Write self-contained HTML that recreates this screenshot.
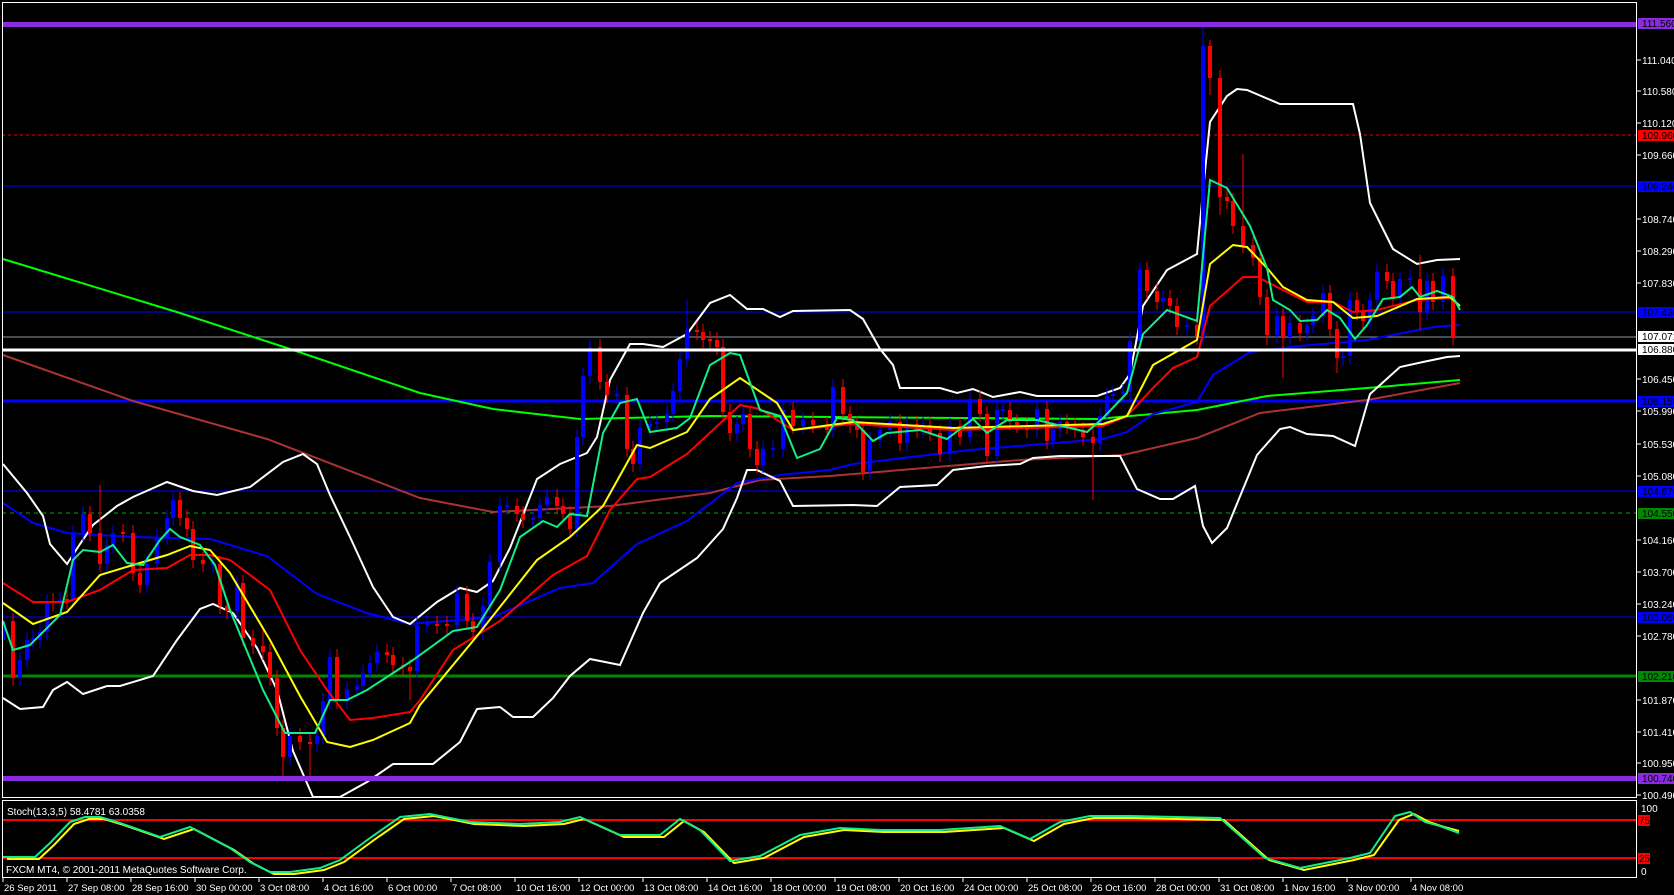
<!DOCTYPE html>
<html><head><meta charset="utf-8"><style>
html,body{margin:0;padding:0;background:#000;width:1674px;height:895px;overflow:hidden}
svg{display:block}
text{font-family:"Liberation Sans",sans-serif;font-size:10px;fill:#fff}
.k{fill:#000}
.t{font-size:9.5px}
</style></head><body>
<svg width="1674" height="895" viewBox="0 0 1674 895" xmlns="http://www.w3.org/2000/svg">
<rect width="1674" height="895" fill="#000"/>
<line x1="2" y1="135" x2="1637" y2="135" stroke="#e00" stroke-dasharray="3,3"/>
<line x1="2" y1="186" x2="1637" y2="186" stroke="#00f"/>
<line x1="2" y1="312" x2="1637" y2="312" stroke="#00f"/>
<line x1="2" y1="337" x2="1637" y2="337" stroke="#8a9aa8"/>
<line x1="2" y1="401" x2="1637" y2="401" stroke="#00f" stroke-width="3"/>
<line x1="2" y1="491" x2="1637" y2="491" stroke="#00f"/>
<line x1="2" y1="513" x2="1637" y2="513" stroke="#0a0" stroke-dasharray="4,4"/>
<line x1="2" y1="617" x2="1637" y2="617" stroke="#00f"/>
<line x1="2" y1="676" x2="1637" y2="676" stroke="#080" stroke-width="3"/>

<polyline fill="none" stroke="#0f0" stroke-width="2" points="3,259 180,313 293,350 420,393 493,409 580,419 710,416 830,417 1097,419 1197,410 1267,396 1367,388 1460,380"/>
<polyline fill="none" stroke="#a33" stroke-width="2" points="3,355 133,401 267,439 420,498 493,512 610,506 710,493 760,480 830,476 1020,460 1123,455 1197,438 1260,413 1367,400 1460,383"/>
<polyline fill="none" stroke="#00f" stroke-width="2" points="3,503 33,523 67,533 133,537 210,539 267,556 317,594 367,613 410,624 493,617 560,588 593,583 637,544 687,521 737,483 780,475 830,470 853,464 970,450 1103,439 1127,432 1153,414 1197,402 1213,375 1250,352 1300,346 1367,340 1433,327 1460,325"/>
<polyline fill="none" stroke="#fff" stroke-width="2" points="3,464 27,493 43,516 50,544 67,564 80,544 93,525 117,506 133,497 167,482 193,491 217,495 250,487 283,462 303,454 317,464 330,495 350,537 373,587 393,617 410,624 437,602 460,588 477,592 493,581 510,548 537,479 560,464 587,453 597,437 610,380 630,344 643,344 663,347 687,334 710,303 730,295 747,309 763,309 780,317 793,311 850,310 863,319 880,349 893,365 900,388 940,388 957,393 973,389 993,397 1020,392 1037,396 1097,396 1120,388 1130,374 1143,306 1167,270 1197,254 1203,191 1210,122 1227,96 1237,89 1247,90 1280,104 1353,104 1360,134 1370,203 1393,249 1417,264 1437,260 1460,259"/>
<polyline fill="none" stroke="#fff" stroke-width="2" points="3,698 20,709 43,707 53,690 67,682 83,694 107,686 120,686 153,676 177,640 200,609 213,604 233,613 257,648 277,690 293,751 313,797 340,797 367,782 393,764 420,764 433,764 460,742 477,709 500,707 513,717 533,717 553,698 570,676 590,659 620,665 643,613 660,583 697,558 723,529 737,498 747,470 757,470 780,481 793,506 853,505 877,506 900,487 937,485 953,470 987,466 1020,464 1033,458 1060,456 1120,456 1137,489 1160,499 1173,499 1195,486 1203,526 1212,543 1227,528 1257,455 1280,429 1290,427 1307,434 1333,436 1355,446 1370,394 1400,367 1423,362 1447,357 1460,356"/>

<path fill="none" stroke="#00f" stroke-width="1" d="M3 648V613M20 686V652M27 668V632M33 649V630M40 648V624M47 640V594M60 610V592M73 608V525M83 541V506M107 572V537M113 553V525M147 593V556M157 572V529M167 545V510M173 526V492M213 573V555M237 619V575M290 765V728M317 752V728M323 744V693M330 709V649M347 709V682M357 698V678M363 694V665M370 681V655M377 671V644M417 679V617M427 633V615M457 633V586M483 640V598M490 614V554M500 570V498M507 515V497M533 528V510M540 526V497M547 513V489M577 537V429M583 445V368M590 384V339M617 404V386M640 472V420M650 436V416M657 432V414M667 430V406M673 422V383M680 399V351M687 367V300M737 441V416M743 432V406M763 473V441M773 458V440M783 457V402M803 434V412M833 438V379M870 480V432M880 448V422M890 438V414M907 451V416M923 438V417M950 462V418M970 445V391M997 464V402M1003 419V401M1037 438V401M1053 449V422M1060 438V414M1100 451V408M1107 424V388M1113 404V386M1123 402V384M1130 400V333M1140 349V262M1163 310V290M1187 335V317M1203 345V24M1277 343V308M1290 345V315M1307 341V317M1313 333V308M1323 324V285M1343 366V348M1350 364V292M1370 329V292M1377 308V264M1400 305V271M1410 288V270M1427 320V273M1443 310V268"/>
<path fill="none" stroke="#00f" stroke-width="4" d="M3 640V621M20 678V660M27 660V640M33 641V638M40 640V632M47 632V602M60 602V600M73 600V533M83 533V514M107 564V545M113 545V533M147 585V564M157 564V537M167 537V518M173 518V500M213 565V563M237 611V583M290 757V736M317 744V736M323 736V701M330 701V657M347 701V690M357 690V686M363 686V673M370 673V663M377 663V652M417 671V625M427 625V623M457 625V594M483 632V606M490 606V562M500 562V506M507 507V505M533 520V518M540 518V505M547 505V497M577 529V437M583 437V376M590 376V347M617 396V394M640 464V428M650 428V424M657 424V422M667 422V414M673 414V391M680 391V359M687 359V330M737 433V424M743 424V414M763 465V449M773 450V448M783 449V410M803 426V420M833 430V387M870 472V440M880 440V430M890 430V422M907 443V424M923 430V425M950 454V426M970 437V399M997 456V410M1003 411V409M1037 430V409M1053 441V430M1060 430V422M1100 443V416M1107 416V396M1113 396V394M1123 394V392M1130 392V341M1140 341V270M1163 302V298M1187 327V325M1203 337V46M1277 335V316M1290 337V323M1307 333V325M1313 325V316M1323 316V293M1343 358V356M1350 356V300M1370 321V300M1377 300V272M1400 297V279M1410 280V278M1427 312V281M1443 302V276"/>
<path fill="none" stroke="#f00" stroke-width="1" d="M13 613V686M53 593V611M67 591V609M90 506V541M100 485V572M123 524V542M133 525V581M140 565V593M180 492V526M187 510V537M193 521V568M203 552V572M220 556V614M227 598V619M243 575V646M253 630V654M263 630V660M270 644V686M277 670V736M283 720V777M300 728V750M310 734V777M337 649V709M387 644V663M393 647V673M403 657V675M410 659V700M437 616V634M447 616V634M467 586V629M473 613V640M517 498V522M523 506V528M557 489V514M563 498V522M570 506V537M600 339V390M607 374V403M627 387V457M633 441V472M697 322V340M703 324V348M710 331V349M717 332V355M723 339V420M730 404V441M750 406V457M757 441V473M793 402V434M813 412V433M827 417V438M843 379V422M850 406V433M857 417V438M863 422V480M900 414V451M917 416V438M930 417V441M940 425V462M960 418V445M980 391V422M987 406V464M1010 402V430M1017 414V433M1027 417V438M1047 401V449M1067 414V434M1075 418V438M1083 422V445M1093 429V500M1147 262V299M1157 283V310M1170 290V314M1177 298V335M1197 317V345M1210 40V95M1220 70V215M1227 189V209M1233 193V234M1243 154V253M1253 237V266M1260 250V305M1267 289V345M1283 308V378M1300 315V341M1330 285V337M1337 321V373M1357 292V320M1363 304V329M1387 264V289M1393 273V305M1420 255V330M1433 273V310M1453 268V345"/>
<path fill="none" stroke="#f00" stroke-width="4" d="M13 621V678M53 601V603M67 599V601M90 514V533M100 533V564M123 532V534M133 533V573M140 573V585M180 500V518M187 518V529M193 529V560M203 560V564M220 564V606M227 606V611M243 583V638M253 638V646M263 646V652M270 652V678M277 678V728M283 728V757M300 736V742M310 742V744M337 657V701M387 652V655M393 655V665M403 665V667M410 667V671M437 624V626M447 624V626M467 594V621M473 621V632M517 506V514M523 514V520M557 497V506M563 506V514M570 514V529M600 347V382M607 382V395M627 395V449M633 449V464M697 330V332M703 332V340M710 339V341M717 340V347M723 347V412M730 412V433M750 414V449M757 449V465M793 410V426M813 420V425M827 425V430M843 387V414M850 414V425M857 425V430M863 430V472M900 422V443M917 424V430M930 425V433M940 433V454M960 426V437M980 399V414M987 414V456M1010 410V422M1017 422V425M1027 425V430M1047 409V441M1067 422V426M1075 426V430M1083 430V437M1093 437V443M1147 270V291M1157 291V302M1170 298V306M1177 306V327M1197 325V337M1210 46V78M1220 78V197M1227 197V201M1233 201V226M1243 226V245M1253 245V258M1260 258V297M1267 297V335M1283 316V337M1300 323V333M1330 293V329M1337 329V358M1357 300V312M1363 312V321M1387 272V281M1393 281V297M1420 279V312M1433 281V302M1453 276V337"/>

<polyline fill="none" stroke="#f00" stroke-width="2" points="3,583 33,602 67,602 100,590 133,570 167,568 190,555 210,555 230,560 270,590 300,650 327,690 350,720 373,718 410,712 420,700 453,650 500,621 553,575 587,556 610,510 637,479 650,477 687,454 740,405 760,409 793,430 853,424 953,430 1103,426 1127,416 1153,388 1173,368 1197,357 1210,306 1243,277 1257,277 1273,285 1307,302 1333,302 1353,312 1377,310 1417,300 1450,298 1460,306"/>
<polyline fill="none" stroke="#ff0" stroke-width="2" points="3,603 33,624 67,612 100,575 133,565 167,555 190,546 210,550 230,573 270,640 300,696 327,742 350,747 373,740 410,723 420,705 477,636 537,560 570,537 603,506 637,445 650,448 687,432 710,399 740,378 777,403 793,430 853,422 953,428 1103,424 1127,416 1153,365 1197,340 1210,264 1233,245 1247,247 1267,268 1283,287 1307,300 1333,302 1353,318 1377,316 1417,299 1450,297 1460,306"/>
<polyline fill="none" stroke="#1e8" stroke-width="2" points="3,621 13,650 30,645 60,615 73,560 83,550 100,552 113,545 127,563 143,565 160,540 170,529 180,537 200,545 215,565 230,610 263,690 285,733 315,733 330,700 347,700 367,690 390,675 413,660 453,631 477,627 500,590 520,537 543,521 557,527 570,514 587,516 603,433 620,403 637,399 650,432 677,428 690,418 710,365 730,353 740,355 760,410 780,416 797,458 820,449 837,418 853,420 873,441 887,433 920,430 947,439 973,419 987,433 1007,420 1037,420 1087,432 1103,418 1127,393 1143,334 1167,310 1197,321 1210,180 1227,188 1250,226 1267,268 1273,300 1290,310 1300,321 1317,320 1327,310 1340,318 1355,339 1367,325 1383,299 1400,297 1412,287 1420,297 1437,291 1453,297 1460,310"/>

<line x1="2" y1="350" x2="1637" y2="350" stroke="#fff" stroke-width="3"/>
<rect x="2" y="22" width="1635" height="5" fill="#8a2be2"/>
<rect x="2" y="776" width="1635" height="5" fill="#8a2be2"/>
<rect x="2.5" y="2.5" width="1634" height="795" fill="none" stroke="#fff"/>
<rect x="2.5" y="800.5" width="1634" height="77" fill="none" stroke="#fff"/>
<line x1="3" y1="820" x2="1636" y2="820" stroke="#f00" stroke-width="2"/>
<line x1="3" y1="858" x2="1636" y2="858" stroke="#f00" stroke-width="2"/>
<polyline fill="none" stroke="#ff0" stroke-width="2" points="7,859 39,859 54,845 74,824 89,819 104,819 124,825 164,839 194,829 234,850 254,864 274,874 294,874 324,870 344,862 374,840 404,819 434,816 474,824 524,826 564,824 584,819 624,837 664,837 684,821 704,832 734,863 764,858 804,837 844,830 884,832 944,832 1004,828 1034,841 1064,824 1094,818 1134,818 1224,820 1269,860 1304,870 1354,860 1374,855 1399,820 1414,814 1429,822 1444,827 1459,831"/>
<polyline fill="none" stroke="#1e8" stroke-width="2" points="3,857 35,857 50,843 70,822 85,817 100,817 120,823 160,837 190,827 230,848 250,862 270,872 290,872 320,868 340,860 370,838 400,817 430,814 470,822 520,824 560,822 580,817 620,835 660,835 680,819 700,830 730,861 760,856 800,835 840,828 880,830 940,830 1000,826 1030,839 1060,822 1090,816 1130,816 1220,818 1265,858 1300,868 1350,858 1370,853 1395,816 1410,812 1425,822 1440,826 1459,833"/>
<text x="7" y="815">Stoch(13,3,5) 58.4781 63.0358</text>
<text x="6" y="873">FXCM MT4, © 2001-2011 MetaQuotes Software Corp.</text>

<g stroke="#fff">
<line x1="1637" y1="60" x2="1641" y2="60"/><line x1="1637" y1="91" x2="1641" y2="91"/><line x1="1637" y1="123" x2="1641" y2="123"/><line x1="1637" y1="155" x2="1641" y2="155"/><line x1="1637" y1="219" x2="1641" y2="219"/><line x1="1637" y1="251" x2="1641" y2="251"/><line x1="1637" y1="283" x2="1641" y2="283"/><line x1="1637" y1="379" x2="1641" y2="379"/><line x1="1637" y1="411" x2="1641" y2="411"/><line x1="1637" y1="444" x2="1641" y2="444"/><line x1="1637" y1="476" x2="1641" y2="476"/><line x1="1637" y1="540" x2="1641" y2="540"/><line x1="1637" y1="572" x2="1641" y2="572"/><line x1="1637" y1="604" x2="1641" y2="604"/><line x1="1637" y1="636" x2="1641" y2="636"/><line x1="1637" y1="700" x2="1641" y2="700"/><line x1="1637" y1="732" x2="1641" y2="732"/><line x1="1637" y1="763" x2="1641" y2="763"/><line x1="1637" y1="795" x2="1641" y2="795"/>
</g>
<text x="1642" y="64">111.040</text><text x="1642" y="95">110.580</text><text x="1642" y="127">110.120</text><text x="1642" y="159">109.660</text><text x="1642" y="223">108.740</text><text x="1642" y="255">108.290</text><text x="1642" y="287">107.830</text><text x="1642" y="383">106.450</text><text x="1642" y="415">105.990</text><text x="1642" y="448">105.530</text><text x="1642" y="480">105.080</text><text x="1642" y="544">104.160</text><text x="1642" y="576">103.700</text><text x="1642" y="608">103.240</text><text x="1642" y="640">102.780</text><text x="1642" y="704">101.870</text><text x="1642" y="736">101.410</text><text x="1642" y="767">100.950</text><text x="1642" y="799">100.490</text>
<rect x="1638" y="18" width="36" height="11" fill="#8a2be2"/><text class="k" x="1642" y="27">111.560</text>
<rect x="1638" y="130" width="36" height="11" fill="#f00"/><text class="k" x="1642" y="139">109.960</text>
<rect x="1638" y="181" width="36" height="11" fill="#00f"/><text class="k" x="1642" y="190">109.240</text>
<rect x="1638" y="307" width="36" height="11" fill="#00f"/><text class="k" x="1642" y="316">107.430</text>
<rect x="1638" y="331" width="36" height="11" fill="#fff"/><text class="k" x="1642" y="340">107.071</text>
<rect x="1638" y="344" width="36" height="11" fill="#fff"/><text class="k" x="1642" y="353">106.880</text>
<rect x="1638" y="396" width="36" height="11" fill="#00f"/><text class="k" x="1642" y="405">106.150</text>
<rect x="1638" y="486" width="36" height="11" fill="#00f"/><text class="k" x="1642" y="495">104.870</text>
<rect x="1638" y="508" width="36" height="11" fill="#080"/><text class="k" x="1642" y="517">104.550</text>
<rect x="1638" y="612" width="36" height="11" fill="#00f"/><text class="k" x="1642" y="621">103.060</text>
<rect x="1638" y="671" width="36" height="11" fill="#080"/><text class="k" x="1642" y="680">102.210</text>
<rect x="1638" y="773" width="36" height="11" fill="#8a2be2"/><text class="k" x="1642" y="782">100.740</text>
<text x="1641" y="812">100</text>
<rect x="1638" y="815" width="12" height="11" fill="#f00"/><text class="k" x="1639" y="824">75</text>
<rect x="1638" y="853" width="12" height="11" fill="#f00"/><text class="k" x="1639" y="862">25</text>
<text x="1641" y="875">0</text>

<g stroke="#fff">
<line x1="3" y1="878" x2="3" y2="882"/><line x1="67" y1="878" x2="67" y2="882"/><line x1="131" y1="878" x2="131" y2="882"/><line x1="195" y1="878" x2="195" y2="882"/><line x1="259" y1="878" x2="259" y2="882"/><line x1="323" y1="878" x2="323" y2="882"/><line x1="387" y1="878" x2="387" y2="882"/><line x1="451" y1="878" x2="451" y2="882"/><line x1="515" y1="878" x2="515" y2="882"/><line x1="579" y1="878" x2="579" y2="882"/><line x1="643" y1="878" x2="643" y2="882"/><line x1="707" y1="878" x2="707" y2="882"/><line x1="771" y1="878" x2="771" y2="882"/><line x1="835" y1="878" x2="835" y2="882"/><line x1="899" y1="878" x2="899" y2="882"/><line x1="963" y1="878" x2="963" y2="882"/><line x1="1027" y1="878" x2="1027" y2="882"/><line x1="1091" y1="878" x2="1091" y2="882"/><line x1="1155" y1="878" x2="1155" y2="882"/><line x1="1219" y1="878" x2="1219" y2="882"/><line x1="1283" y1="878" x2="1283" y2="882"/><line x1="1347" y1="878" x2="1347" y2="882"/><line x1="1411" y1="878" x2="1411" y2="882"/>
</g>
<g class="t">
<text class="t" x="4" y="891">26 Sep 2011</text><text class="t" x="68" y="891">27 Sep 08:00</text><text class="t" x="132" y="891">28 Sep 16:00</text><text class="t" x="196" y="891">30 Sep 00:00</text><text class="t" x="260" y="891">3 Oct 08:00</text><text class="t" x="324" y="891">4 Oct 16:00</text><text class="t" x="388" y="891">6 Oct 00:00</text><text class="t" x="452" y="891">7 Oct 08:00</text><text class="t" x="516" y="891">10 Oct 16:00</text><text class="t" x="580" y="891">12 Oct 00:00</text><text class="t" x="644" y="891">13 Oct 08:00</text><text class="t" x="708" y="891">14 Oct 16:00</text><text class="t" x="772" y="891">18 Oct 00:00</text><text class="t" x="836" y="891">19 Oct 08:00</text><text class="t" x="900" y="891">20 Oct 16:00</text><text class="t" x="964" y="891">24 Oct 00:00</text><text class="t" x="1028" y="891">25 Oct 08:00</text><text class="t" x="1092" y="891">26 Oct 16:00</text><text class="t" x="1156" y="891">28 Oct 00:00</text><text class="t" x="1220" y="891">31 Oct 08:00</text><text class="t" x="1284" y="891">1 Nov 16:00</text><text class="t" x="1348" y="891">3 Nov 00:00</text><text class="t" x="1412" y="891">4 Nov 08:00</text>
</g>
</svg>
</body></html>
